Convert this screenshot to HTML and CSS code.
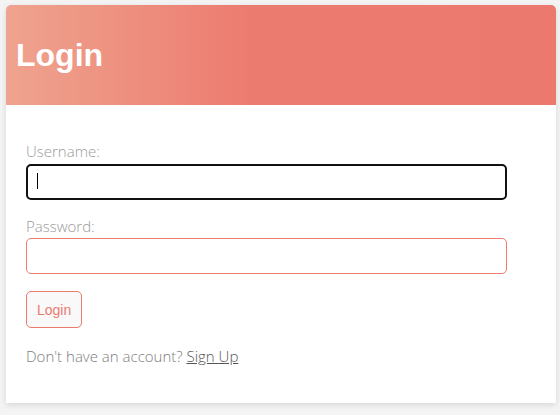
FILE: index.html
```html
<!DOCTYPE html>
<html lang="en">
<head>
<meta charset="utf-8">
<title>Login</title>
<link rel="stylesheet" href="styles.css">
</head>
<body>
<div class="card">
  <header class="card-header">
    <h1 class="title">Login</h1>
  </header>
  <form class="card-body">
    <label class="label" for="username">Username:</label>
    <span class="field">
      <input class="input input-focused" id="username" type="text">
      <span class="caret"></span>
    </span>
    <label class="label label-gap" for="password">Password:</label>
    <input class="input" id="password" type="password">
    <button class="btn" type="button">Login</button>
    <p class="note">Don't have an account? <a class="link" href="#">Sign Up</a></p>
  </form>
</div>
</body>
</html>
```
FILE: styles.css
```css
html, body {
  margin: 0;
  padding: 0;
}
body {
  background: #f4f4f4;
  padding: 5px 4px 0 6px;
  font-family: "Open Sans", "Lato", sans-serif;
  height: 415px;
  box-sizing: border-box;
}
.card {
  width: 550px;
  background: #fff;
  border-radius: 5px 5px 0 0;
  box-shadow: 0 2px 6px rgba(0,0,0,0.12);
}
.card-header {
  height: 100px;
  border-radius: 5px 5px 0 0;
  background: linear-gradient(to right, #efa38f 0%, #ec7b6f 45%, #ec796d 100%);
  display: flex;
  align-items: center;
  padding-left: 10px;
}
.title {
  margin: 0;
  color: #fff;
  font-family: "Liberation Sans", Arial, sans-serif;
  font-weight: bold;
  font-size: 32px;
  line-height: 1;
  padding-top: 0;
}
.card-body {
  display: flex;
  flex-direction: column;
  align-items: flex-start;
  padding: 36px 20px 37px 20px;
  margin: 0;
}
.label {
  font-size: 15px;
  line-height: 20px;
  color: #9a9a9a;
  font-weight: 300;
  margin-bottom: 3px;
}
.label-gap {
  margin-top: 16px;
  margin-bottom: 2px;
}
.field {
  position: relative;
  display: block;
}
.input {
  display: block;
  box-sizing: border-box;
  width: 481px;
  height: 36px;
  border: 1px solid #ec7b6f;
  border-radius: 5px;
  background: #fff;
  margin: 0;
  outline: none;
  padding: 0 10px;
}
.input-focused {
  border: 2px solid #111;
}
.caret {
  position: absolute;
  left: 11px;
  top: 9px;
  width: 1px;
  height: 16px;
  background: #000;
}
.btn {
  margin-top: 17px;
  height: 37px;
  padding: 0 10px;
  border: 1px solid #ec7b6f;
  border-radius: 5px;
  background: #f9f9f9;
  color: #ec7b6f;
  font-family: "Liberation Sans", Arial, sans-serif;
  font-size: 14px;
}
.note {
  margin: 18px 0 0 0;
  font-size: 15px;
  line-height: 20px;
  font-weight: 300;
  color: #7d7d7d;
}
.link {
  color: #555;
  text-decoration: underline;
}
```
